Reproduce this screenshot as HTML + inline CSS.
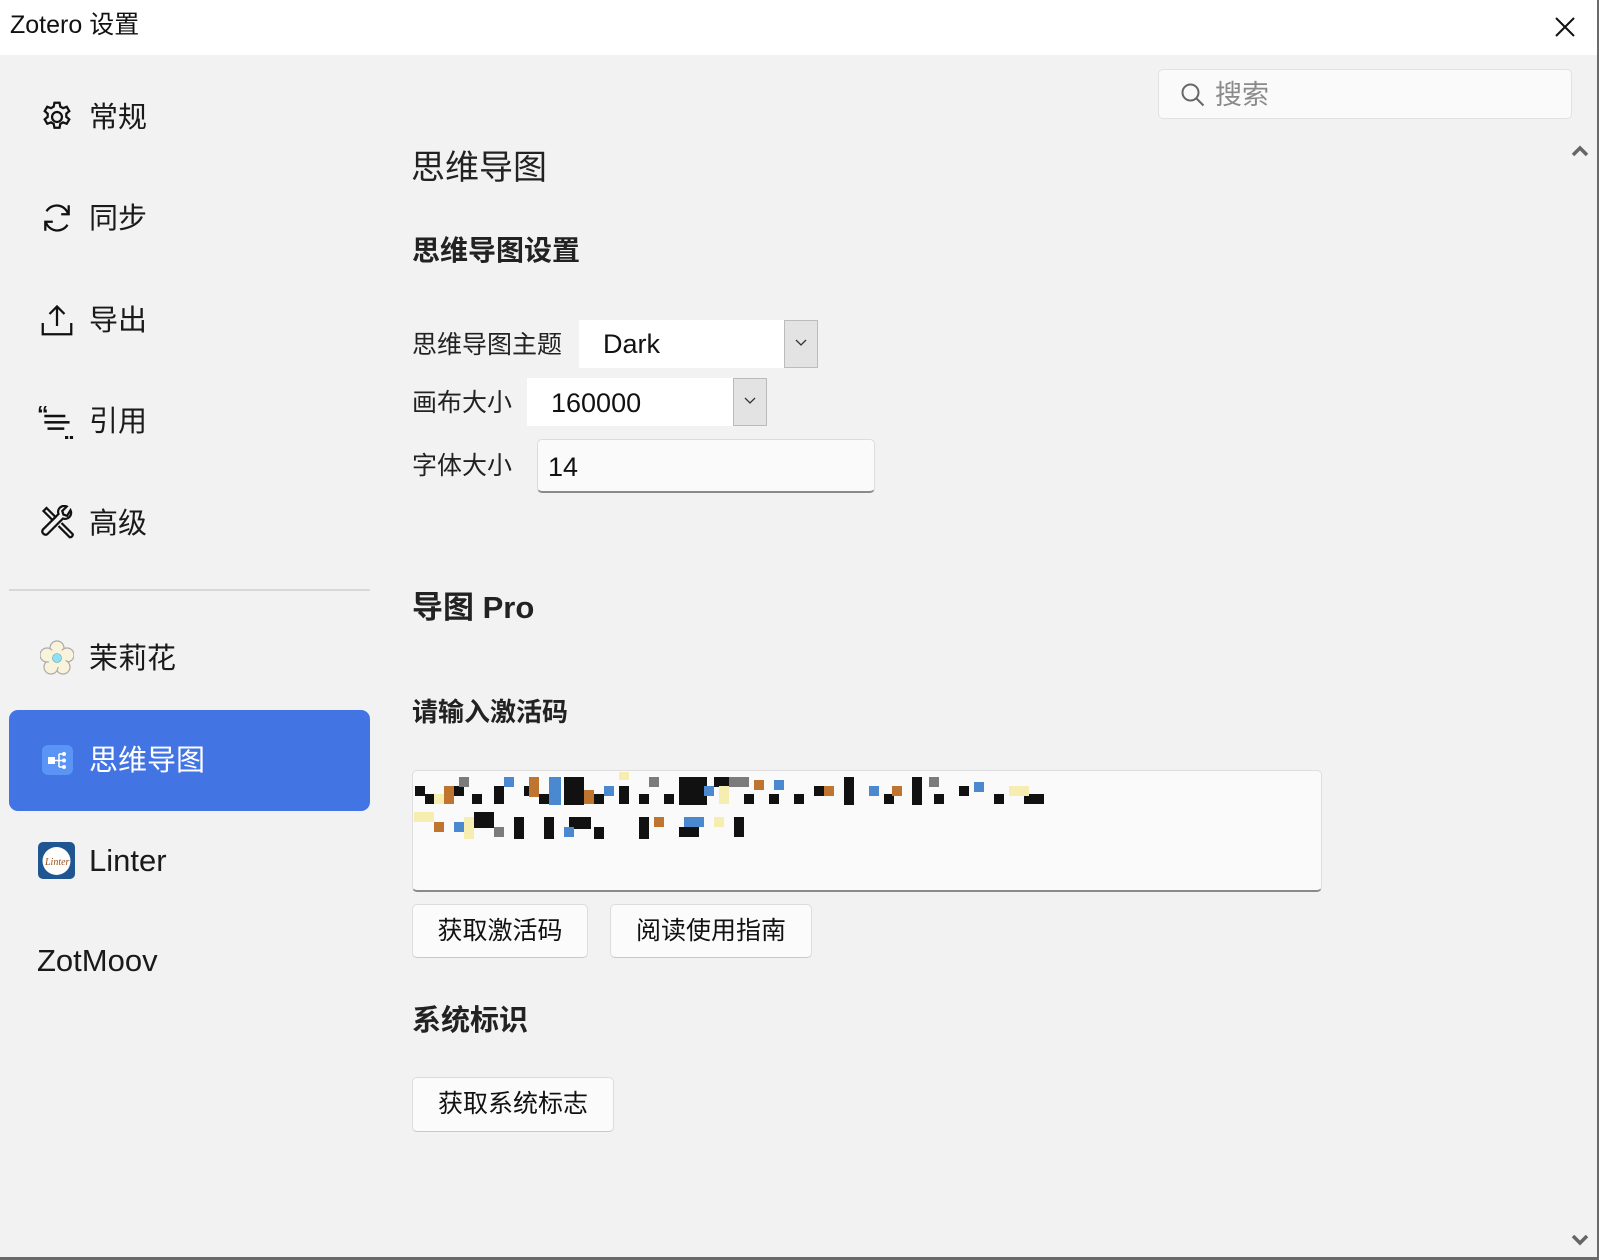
<!DOCTYPE html>
<html><head><meta charset="utf-8"><style>
*{margin:0;padding:0;box-sizing:border-box}
body{width:1599px;height:1260px;overflow:hidden;background:#f2f2f2;font-family:"Liberation Sans","Noto Sans CJK SC",sans-serif;color:#1a1a1a;position:relative}
.a{position:absolute;white-space:nowrap}
.title{left:0;top:0;width:1599px;height:55px;background:#fff}
.nav{font-size:29px;line-height:36px;left:89px}
.ic{position:absolute;left:39px}
.h{font-weight:bold;color:#222}
.lab{font-size:25px;line-height:30px;left:412px;color:#222}
.btn{background:#fbfbfb;border:1px solid #dcdcdc;border-bottom-color:#c8c8c8;border-radius:5px;font-size:25px;text-align:center;color:#111}
</style></head><body>
<div class="a title"></div>
<div class="a" style="left:10px;top:9px;font-size:25px;line-height:32px;color:#111">Zotero 设置</div>
<svg class="a" style="left:1553px;top:15px" width="24" height="24" viewBox="0 0 24 24"><path d="M3 3L21 21M21 3L3 21" stroke="#111" stroke-width="2"/></svg>
<div class="a" style="right:0;top:0;width:2px;height:1260px;background:#6a6a6a"></div>
<div class="a" style="left:0;bottom:0;width:1599px;height:3px;background:#6a6a6a"></div>

<!-- sidebar -->
<svg class="ic" style="top:99px" width="36" height="36" viewBox="0 0 24 24" fill="none" stroke="#111" stroke-width="1.5"><circle cx="12" cy="12" r="3.3"/><path d="M10.3 2.5h3.4l.5 2.6 1.8 1 2.5-.9 1.7 2.9-2 1.7v2.1l2 1.7-1.7 2.9-2.5-.9-1.8 1-.5 2.6h-3.4l-.5-2.6-1.8-1-2.5.9-1.7-2.9 2-1.7v-2.1l-2-1.7 1.7-2.9 2.5.9 1.8-1z"/></svg>
<div class="a nav" style="top:100px">常规</div>
<svg class="ic" style="top:200px" width="36" height="36" viewBox="0 0 24 24" fill="none" stroke="#111" stroke-width="1.5"><path d="M19.5 9.5A8 8 0 0 0 5 7.5M4.5 14.5A8 8 0 0 0 19 16.5"/><path d="M19.8 3.5v6h-5M4.2 20.5v-6h5"/></svg>
<div class="a nav" style="top:201px">同步</div>
<svg class="ic" style="top:302px" width="36" height="36" viewBox="0 0 24 24" fill="none" stroke="#111" stroke-width="1.5"><path d="M12 16V3M7 8l5-5 5 5M2.5 14v7.5h19V14"/></svg>
<div class="a nav" style="top:303px">导出</div>
<svg class="ic" style="top:401px;left:37px" width="42" height="38" viewBox="0 0 40 36" fill="#111"><text x="0" y="20" font-size="22" font-weight="bold" font-family="Liberation Sans">“</text><rect x="7" y="13" width="20" height="2.4"/><rect x="7" y="19" width="24" height="2.4"/><rect x="10" y="25" width="16" height="2.4"/><text x="25" y="36" font-size="22" font-weight="bold" font-family="Liberation Sans">„</text></svg>
<div class="a nav" style="top:404px">引用</div>
<svg class="ic" style="top:505px" width="36" height="36" viewBox="0 0 24 24" fill="none" stroke="#111" stroke-width="1.5"><path d="M3 4l2-2 6 6-2 2zM13 14l7.5 7.5a1.8 1.8 0 0 0 2-2L15 12"/><path d="M21 3.5a4 4 0 0 1-5 5.5L5.5 19.5a2.2 2.2 0 0 1-3-3L13 6a4 4 0 0 1 5.5-5l-3 3 .8 2.4 2.4.8z"/></svg>
<div class="a nav" style="top:506px">高级</div>
<div class="a" style="left:9px;top:589px;width:361px;height:2px;background:#d8d8d8"></div>
<svg class="ic" style="top:640px;left:40px" width="34" height="36" viewBox="0 0 34 36"><g fill="#faf3dc" stroke="#aaa" stroke-width="1.2"><circle cx="17" cy="8" r="7"/><circle cx="27" cy="15" r="7"/><circle cx="23" cy="27" r="7"/><circle cx="11" cy="27" r="7"/><circle cx="7" cy="15" r="7"/></g><circle cx="17" cy="18" r="9" fill="#faf3dc"/><circle cx="17" cy="18" r="4.5" fill="#8fe0f5" stroke="#5aa" stroke-width=".6"/></svg>
<div class="a nav" style="top:641px">茉莉花</div>
<div class="a" style="left:9px;top:710px;width:361px;height:101px;background:#4274e3;border-radius:9px"></div>
<svg class="ic" style="top:745px;left:42px" width="31" height="30" viewBox="0 0 31 30"><rect width="31" height="30" rx="6" fill="#5a94f5"/><rect x="6" y="12" width="7" height="7" fill="#fff"/><path d="M13 15.5h4M17 9v13M17 9h4M17 15.5h4M17 22h4" stroke="#fff" stroke-width="1.5" fill="none"/><circle cx="22" cy="9" r="2" fill="#fff"/><circle cx="22" cy="15.5" r="2" fill="#fff"/><circle cx="22" cy="22" r="2" fill="#fff"/></svg>
<div class="a nav" style="top:743px;color:#fff">思维导图</div>
<svg class="ic" style="top:842px;left:38px" width="37" height="37" viewBox="0 0 37 37"><rect width="37" height="37" rx="5" fill="#1f5590"/><circle cx="18.5" cy="19" r="14" fill="#fff"/><text x="7" y="23" font-size="10" font-style="italic" fill="#a0501a" font-family="Liberation Serif">Linter</text></svg>
<div class="a" style="left:89px;top:843px;font-size:31px;line-height:36px">Linter</div>
<div class="a" style="left:37px;top:943px;font-size:31px;line-height:36px">ZotMoov</div>

<!-- content -->
<div class="a" style="left:1158px;top:69px;width:414px;height:50px;background:#fafafa;border:1px solid #e2e2e2;border-radius:5px"></div>
<svg class="a" style="left:1180px;top:82px" width="26" height="26" viewBox="0 0 26 26" fill="none" stroke="#666" stroke-width="2"><circle cx="10.5" cy="10.5" r="8"/><path d="M16.5 16.5l7 7"/></svg>
<div class="a" style="left:1215px;top:78px;font-size:27px;line-height:34px;color:#8a8a8a">搜索</div>
<svg class="a" style="left:1571px;top:144px" width="18" height="14" viewBox="0 0 18 14"><path d="M2 11l7-7 7 7" stroke="#666" stroke-width="3.5" fill="none"/></svg>
<svg class="a" style="left:1571px;top:1233px" width="18" height="14" viewBox="0 0 18 14"><path d="M2 3l7 7 7-7" stroke="#666" stroke-width="3.5" fill="none"/></svg>

<div class="a" style="left:411px;top:148px;font-size:34px;line-height:40px;color:#222">思维导图</div>
<div class="a h" style="left:412px;top:235px;font-size:28px;line-height:32px">思维导图设置</div>

<div class="a lab" style="top:330px">思维导图主题</div>
<div class="a" style="left:579px;top:320px;width:205px;height:48px;background:#fff"></div>
<div class="a" style="left:603px;top:327px;font-size:27px;line-height:34px;color:#111">Dark</div>
<div class="a" style="left:784px;top:320px;width:34px;height:48px;background:#e3e3e3;border:1px solid #bbb"></div>
<svg class="a" style="left:795px;top:339px" width="12" height="8"><path d="M1 1l5 5 5-5" stroke="#333" stroke-width="1.3" fill="none"/></svg>

<div class="a lab" style="top:388px">画布大小</div>
<div class="a" style="left:527px;top:378px;width:206px;height:48px;background:#fff"></div>
<div class="a" style="left:551px;top:386px;font-size:27px;line-height:34px;color:#111">160000</div>
<div class="a" style="left:733px;top:378px;width:34px;height:48px;background:#e3e3e3;border:1px solid #bbb"></div>
<svg class="a" style="left:744px;top:397px" width="12" height="8"><path d="M1 1l5 5 5-5" stroke="#333" stroke-width="1.3" fill="none"/></svg>

<div class="a lab" style="top:451px">字体大小</div>
<div class="a" style="left:537px;top:439px;width:338px;height:54px;background:#fafafa;border:1px solid #dcdcdc;border-bottom:2px solid #8a8a8a;border-radius:5px"></div>
<div class="a" style="left:548px;top:450px;font-size:27px;line-height:34px;color:#111">14</div>

<div class="a h" style="left:412px;top:590px;font-size:31px;line-height:36px">导图 Pro</div>
<div class="a h" style="left:412px;top:697px;font-size:26px;line-height:30px">请输入激活码</div>

<div class="a" style="left:412px;top:770px;width:910px;height:122px;background:#fafafa;border:1px solid #dedede;border-bottom:2px solid #8a8a8a;border-radius:5px"></div>
<svg class="a" style="left:414px;top:772px" width="650" height="70" viewBox="0 0 650 70">
<g fill="#111">
<rect x="1" y="14" width="10" height="10"/><rect x="11" y="22" width="10" height="10"/><rect x="40" y="14" width="10" height="10"/><rect x="58" y="22" width="10" height="10"/><rect x="80" y="14" width="10" height="18"/><rect x="110" y="14" width="10" height="10"/><rect x="125" y="22" width="10" height="10"/><rect x="150" y="5" width="20" height="28"/><rect x="180" y="22" width="10" height="10"/><rect x="205" y="14" width="10" height="18"/><rect x="225" y="22" width="10" height="10"/><rect x="250" y="22" width="10" height="10"/><rect x="265" y="5" width="28" height="28"/><rect x="300" y="5" width="20" height="10"/><rect x="330" y="22" width="10" height="10"/><rect x="355" y="22" width="10" height="10"/><rect x="380" y="22" width="10" height="10"/><rect x="400" y="14" width="10" height="10"/><rect x="430" y="5" width="10" height="28"/><rect x="470" y="22" width="10" height="10"/><rect x="498" y="5" width="10" height="28"/><rect x="520" y="22" width="10" height="10"/><rect x="545" y="14" width="10" height="10"/><rect x="580" y="22" width="10" height="10"/><rect x="610" y="22" width="20" height="10"/>
<rect x="60" y="40" width="20" height="16"/><rect x="100" y="45" width="10" height="22"/><rect x="130" y="45" width="10" height="22"/><rect x="155" y="45" width="22" height="12"/><rect x="180" y="55" width="10" height="12"/><rect x="225" y="45" width="10" height="22"/><rect x="265" y="55" width="20" height="10"/><rect x="320" y="45" width="10" height="20"/></g>
<g fill="#bf7430"><rect x="30" y="14" width="10" height="18"/><rect x="115" y="5" width="10" height="20"/><rect x="170" y="18" width="10" height="14"/><rect x="340" y="8" width="10" height="10"/><rect x="20" y="50" width="10" height="10"/><rect x="240" y="45" width="10" height="10"/><rect x="410" y="14" width="10" height="10"/><rect x="478" y="14" width="10" height="10"/></g>
<g fill="#4a88d0"><rect x="90" y="5" width="10" height="10"/><rect x="135" y="5" width="12" height="28"/><rect x="190" y="14" width="10" height="10"/><rect x="290" y="14" width="10" height="10"/><rect x="360" y="8" width="10" height="10"/><rect x="455" y="14" width="10" height="10"/><rect x="560" y="10" width="10" height="10"/><rect x="40" y="50" width="10" height="10"/><rect x="270" y="45" width="20" height="10"/><rect x="150" y="55" width="10" height="10"/></g>
<g fill="#f5eeb0"><rect x="20" y="22" width="10" height="10"/><rect x="205" y="0" width="10" height="8"/><rect x="305" y="14" width="10" height="18"/><rect x="0" y="40" width="20" height="10"/><rect x="50" y="45" width="10" height="22"/><rect x="300" y="45" width="10" height="10"/><rect x="595" y="14" width="20" height="10"/></g>
<g fill="#7b7b7b"><rect x="45" y="5" width="10" height="10"/><rect x="235" y="5" width="10" height="10"/><rect x="315" y="5" width="20" height="10"/><rect x="515" y="5" width="10" height="10"/><rect x="80" y="55" width="10" height="10"/></g>
</svg>

<div class="a btn" style="left:412px;top:904px;width:176px;height:54px;line-height:52px">获取激活码</div>
<div class="a btn" style="left:610px;top:904px;width:202px;height:54px;line-height:52px">阅读使用指南</div>

<div class="a h" style="left:412px;top:1004px;font-size:29px;line-height:34px">系统标识</div>
<div class="a btn" style="left:412px;top:1077px;width:202px;height:55px;line-height:53px">获取系统标志</div>
</body></html>
